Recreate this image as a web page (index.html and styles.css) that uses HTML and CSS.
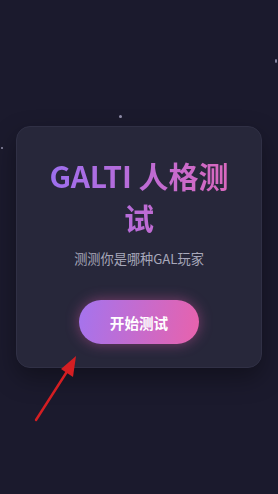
FILE: index.html
```html
<!DOCTYPE html>
<html>
<head>
  <title>GALTI 人格测试</title>
  <meta charset="utf-8">
  <link rel="stylesheet" href="styles.css">
</head>
<body>
  <div class="page">
    <span class="star s1"></span>
    <span class="star s2"></span>
    <span class="star s3"></span>
    <div class="card">
      <h1 class="title">GALTI 人格测试</h1>
      <p class="sub">测测你是哪种GAL玩家</p>
      <button class="start">开始测试</button>
    </div>
    <svg class="arrow" width="60" height="80" viewBox="0 0 60 80">
      <line x1="6" y1="74" x2="38" y2="24" stroke="#d41e22" stroke-width="2.4" stroke-linecap="round"/>
      <polygon points="46,10 43,31 31,23" fill="#d41e22"/>
    </svg>
  </div>
</body>
</html>
```

FILE: styles.css
```css
* {
  box-sizing: border-box;
}

html, body {
  margin: 0;
  height: 100%;
  background: #1b1a2d;
}

body {
  font-family: "Noto Sans CJK SC", "Noto Sans", sans-serif;
}

.page {
  position: relative;
  height: 100%;
  display: flex;
  align-items: center;
  justify-content: center;
  padding: 0 16px;
}

.card {
  width: 100%;
  background: #27273a;
  border: 1px solid #303045;
  border-radius: 14px;
  padding: 27px 24px 23px;
  text-align: center;
  box-shadow: 0 10px 24px rgba(0, 0, 0, 0.35);
}

.title {
  margin: 0;
  font-size: 30px;
  line-height: 42px;
  font-weight: 700;
  background: linear-gradient(90deg, #9a6ff0, #dc68bc);
  -webkit-background-clip: text;
  background-clip: text;
  color: transparent;
}

.sub {
  margin: 10px 0 0;
  font-size: 13.2px;
  line-height: 21px;
  color: #a8a8ba;
}

.start {
  margin-top: 31px;
  height: 44px;
  padding: 0 31px;
  border: none;
  border-radius: 22px;
  font-family: inherit;
  font-size: 14.6px;
  font-weight: 700;
  color: #fff;
  background: linear-gradient(100deg, #a474ee, #e862ac);
  box-shadow: 0 0 14px rgba(226, 92, 170, 0.45);
}

.star {
  position: absolute;
  width: 3px;
  height: 3px;
  border-radius: 50%;
  background: #8f8ca8;
}

.s1 { left: 119px; top: 115px; }
.s2 { left: 1px; top: 147px; width: 2px; height: 2px; }
.s3 { left: 275px; top: 59px; width: 2px; height: 4px; }

.arrow {
  position: absolute;
  left: 30px;
  top: 346px;
}
```
